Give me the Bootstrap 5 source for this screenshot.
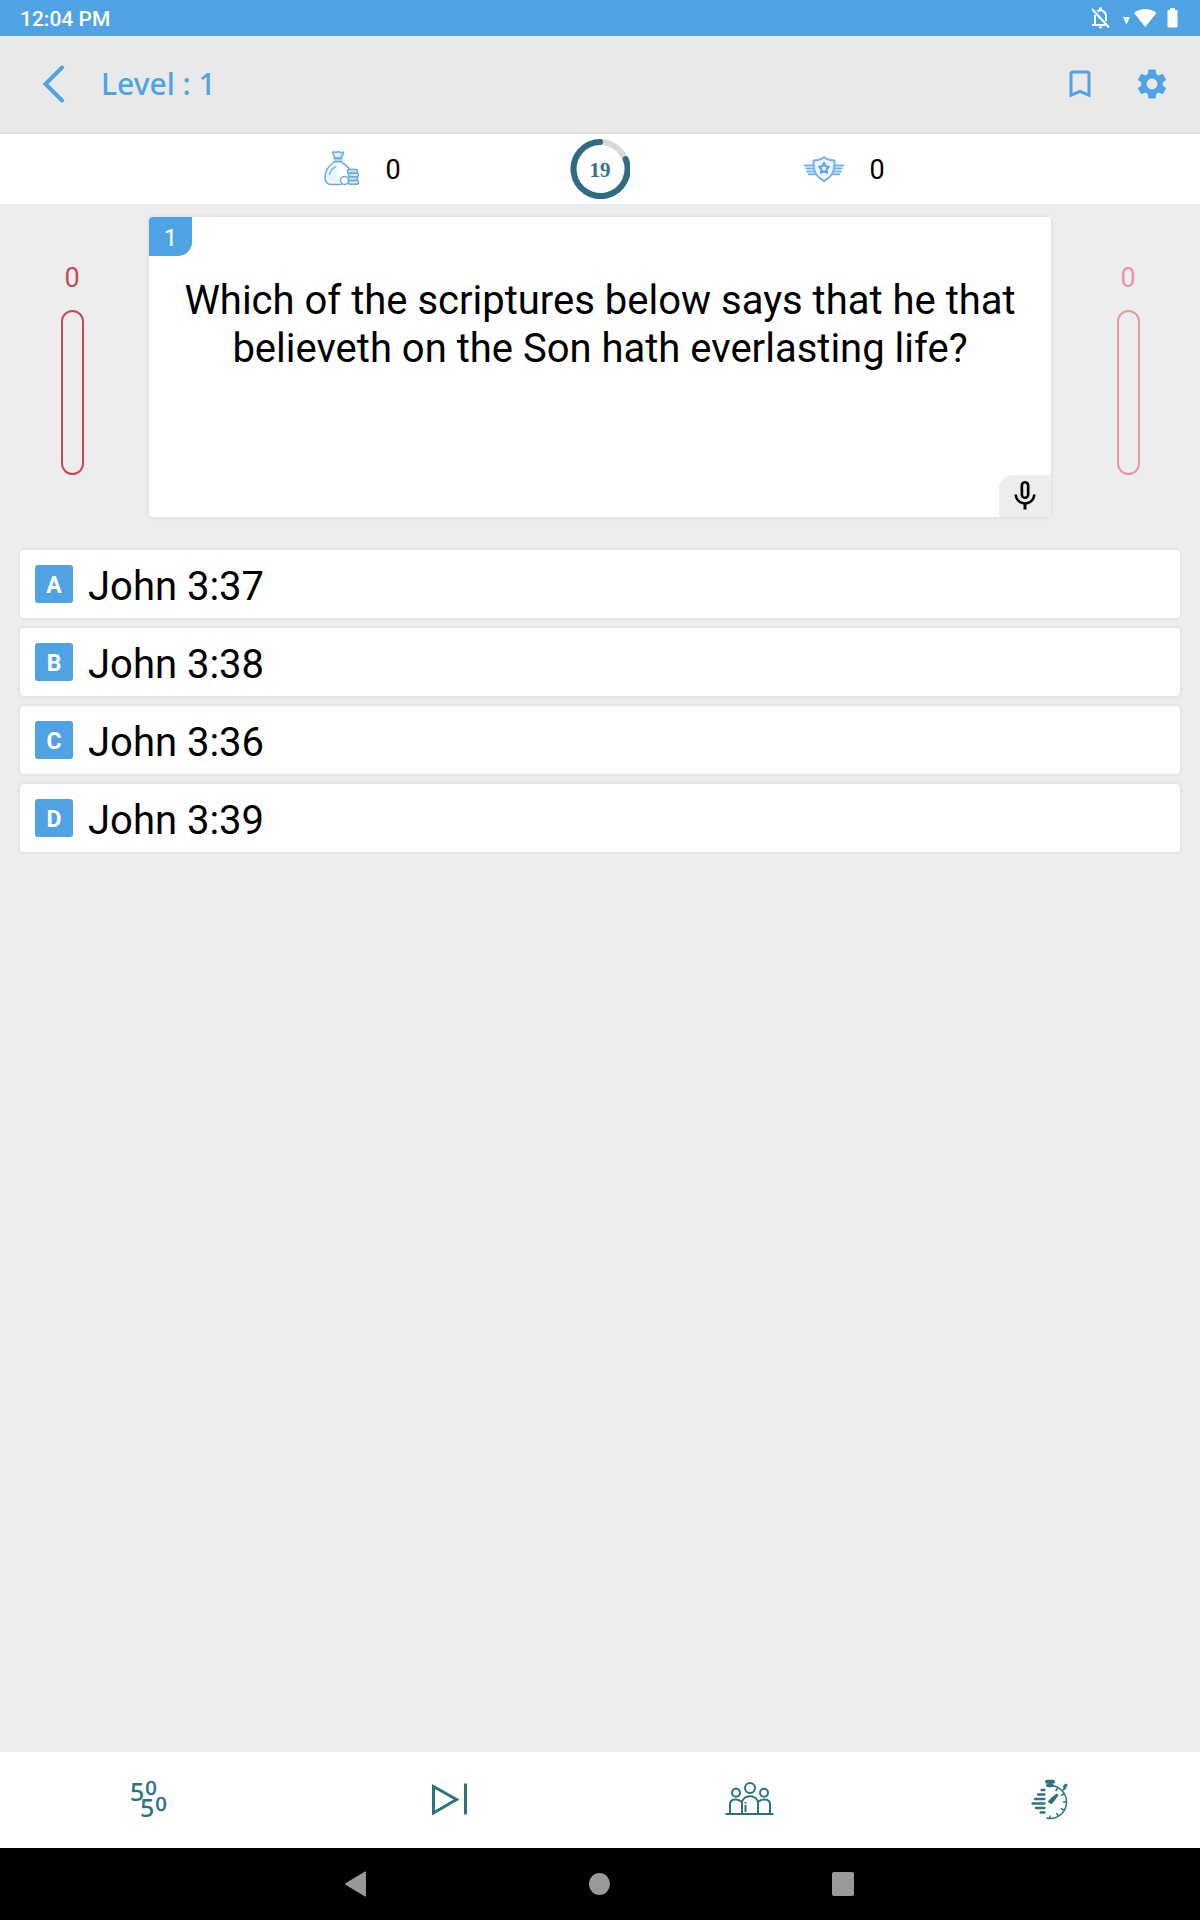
<!DOCTYPE html>
<html lang="en">
<head>
<meta charset="utf-8">
<meta name="viewport" content="width=device-width, initial-scale=1">
<title>Level : 1</title>
<link href="https://cdn.jsdelivr.net/npm/bootstrap@5.3.0/dist/css/bootstrap.min.css" rel="stylesheet">
<style>
:root { --sky: #4fa3e3; --teal: #2b7285; }
body { font-family: Roboto, "Noto Sans", sans-serif; background: #ededed; color: #000; }
svg { display: block; flex: none; }
.bare { background: none; border: 0; padding: 0; color: inherit; }
.status-strip { height: 36px; background: var(--sky); padding: 2px 22px 0 20px; font-size: 21px; line-height: 30px; font-weight: 500; }
.app-head { height: 98px; background: #e9e9e9; border-bottom: 2px solid #dedede; padding: 0 30px 0 34px; color: var(--sky); }
.app-title { font: 500 30px/40px "Noto Sans", "Open Sans", sans-serif; margin: 0; }
.head-start { gap: 22px; }
.tools { gap: 36px; }
.stats { height: 70px; }
.stat { gap: 24px; }
.stat .num { padding-top: 2px; }
.num { font-size: 27px; line-height: 32px; }
.timer { width: 60px; height: 60px; }
.timer span { font: 700 21px/24px "Liberation Serif", serif; color: #356f8a; padding-top: 2px; }
.side { flex: 0 0 12%; color: #c64b5a; padding-top: 45px; }
.side.faded { color: #e996a2; }
.tube { width: 23px; height: 165px; border: 2px solid currentColor; border-radius: 12px; margin-top: 16px; }
.quiz-area { padding-top: 13px; }
.question { min-height: 300px; margin: 0 5px; border-radius: 4px; box-shadow: 0 0 4px rgba(0,0,0,.1); padding: 60px 24px; }
.question h1 { font-size: 40px; line-height: 48px; font-weight: 400; margin: 0; }
.q-index { width: 43px; height: 39px; background: var(--sky); border-radius: 4px 0 14px 0; font-size: 24px; line-height: 42px; }
.mic { width: 52px; height: 42px; background: #ededed; border-radius: 14px 0 4px 0; }
.answers { gap: 10px; padding: 33px 20px 0; }
.answer { height: 68px; border-radius: 4px; padding: 0 15px; gap: 15px; font-size: 40px; line-height: 48px; box-shadow: 0 0 4px rgba(0,0,0,.1); }
.answer span:last-child { padding-top: 5px; }
.letter { width: 38px; height: 38px; border-radius: 3px; background: var(--sky); font-size: 23px; line-height: 41px; font-weight: 700; }
.lifelines { height: 96px; color: var(--teal); }
.sys-nav { height: 72px; gap: 208px; background: #000; color: #999; }
</style>
<script src="https://cdn.jsdelivr.net/npm/bootstrap@5.3.0/dist/js/bootstrap.bundle.min.js"></script>
</head>
<body class="d-flex flex-column min-vh-100">

<div class="status-strip d-flex align-items-center justify-content-between text-white">
  <span>12:04 PM</span>
  <svg width="90" height="24" viewBox="0 0 90 24" fill="currentColor" aria-hidden="true">
    <g fill="none" stroke="currentColor" stroke-width="2">
      <path d="M4 2 21 20.500"/>
      <path d="M7 8v9.500M4 18h13.500M9.500 4.500C13 1.500 18 5 18 9v5"/>
    </g>
    <path d="M11 .5h3v3h-3zM10.500 19.500h4a2 2 0 0 1-4 0z"/>
    <path d="M35 10h7l-3.500 7.500z"/>
    <path d="M46 6c6-5.500 16.500-5.500 22.500 0L57.200 20z"/>
    <path d="M82 1h5v2h1.500q1 0 1 1v15.500q0 1-1 1h-8q-1 0-1-1V4q0-1 1-1H82z"/>
  </svg>
</div>

<header class="app-head d-flex align-items-center justify-content-between">
  <div class="head-start d-flex align-items-center">
    <button class="bare" aria-label="Back">
      <svg width="45" height="44" viewBox="0 0 45 44" fill="none" stroke="currentColor" stroke-width="4" stroke-linecap="round" stroke-linejoin="miter"><path d="M28 5.500 11.500 22 28 38.500"/></svg>
    </button>
    <p class="app-title">Level : 1</p>
  </div>
  <div class="tools d-flex">
    <button class="bare" aria-label="Bookmark">
      <svg width="36" height="36" viewBox="0 0 24 24" fill="currentColor"><path d="M17 3H7c-1.100 0-2 .9-2 2v16l7-3 7 3V5c0-1.100-.9-2-2-2zm0 15-5-2.180L7 18V5h10v13z"/></svg>
    </button>
    <button class="bare" aria-label="Settings">
      <svg width="36" height="36" viewBox="0 0 24 24" fill="currentColor"><path d="M19.140 12.940c.04-.3.060-.61.060-.94 0-.32-.02-.64-.07-.94l2.030-1.580c.18-.14.230-.41.120-.61l-1.920-3.320c-.12-.22-.37-.29-.59-.22l-2.390.96c-.5-.38-1.030-.7-1.620-.94l-.36-2.540c-.04-.24-.24-.41-.48-.41h-3.840c-.24 0-.43.170-.47.410l-.36 2.540c-.59.240-1.130.570-1.620.940l-2.390-.96c-.22-.08-.47 0-.59.220L2.740 8.870c-.12.210-.08.470.120.610l2.030 1.580c-.05.3-.09.630-.09.940s.02.640.070.940l-2.030 1.580c-.18.140-.23.410-.12.610l1.920 3.320c.12.220.37.290.59.220l2.390-.96c.5.380 1.030.7 1.620.94l.36 2.540c.05.240.24.410.48.410h3.840c.24 0 .44-.17.470-.41l.36-2.540c.59-.24 1.130-.56 1.620-.94l2.390.96c.22.080.47 0 .59-.22l1.920-3.320c.12-.22.070-.47-.12-.61l-2.010-1.580zM12 15.600c-1.980 0-3.600-1.620-3.600-3.600s1.620-3.600 3.600-3.600 3.600 1.620 3.600 3.600-1.620 3.600-3.600 3.600z"/></svg>
    </button>
  </div>
</header>

<section class="stats bg-white">
  <div class="row row-cols-5 g-0 h-100 justify-content-center align-items-center">
    <div class="stat d-flex justify-content-center align-items-center ps-1">
      <svg width="38" height="38" viewBox="0 0 38 38" fill="none" stroke="#6fa9dc" stroke-width="1.500" stroke-linejoin="round" stroke-linecap="round" aria-hidden="true">
        <path d="M12 8 9.500 2.500c2-2 2.500 1 4.500-.5s3 1.500 4.500.5 2.500-.5 2 1L17.500 8.500z" fill="#dcedfc"/>
        <path d="M11.500 8.500h7M11.500 11.500h7" stroke-width="2"/>
        <path d="M12 11.500C6 15.500 1.500 20 2 27.500c.3 5.500 3 7 6 7h10M18 11.500c3 2.500 6.500 4.500 9 8" fill="#edf6ff"/>
        <path d="M6.500 24.500c1-4 3-6.500 6.500-8" stroke="#82b9ea"/>
        <g fill="#cfe6fb"><rect x="24.500" y="19.500" width="10" height="3.700" rx="1.500"/><rect x="25.500" y="23.200" width="10" height="3.700" rx="1.500"/><rect x="24.500" y="26.900" width="10" height="3.700" rx="1.500"/><rect x="25.500" y="30.600" width="10" height="3.700" rx="1.500"/></g>
        <circle cx="21.500" cy="30.500" r="4" fill="#fff"/>
      </svg>
      <span class="num">0</span>
    </div>
    <div class="d-flex justify-content-center">
      <div class="timer position-relative d-flex align-items-center justify-content-center">
        <svg class="position-absolute top-0 start-0" width="60" height="60" viewBox="0 0 60 60" fill="none" stroke-width="6" aria-hidden="true">
          <circle cx="30" cy="30" r="27" stroke="#d9d9d9"/>
          <path d="M55.700 20A27 27 0 1 1 30 3" stroke="#2f6c84" stroke-linecap="round"/>
        </svg>
        <span>19</span>
      </div>
    </div>
    <div class="stat d-flex justify-content-center align-items-center ps-2">
      <svg width="42" height="28" viewBox="0 0 42 28" fill="none" stroke="#76b2e8" stroke-width="2" stroke-linejoin="round" aria-hidden="true">
        <path d="M1 10.500h10M2.500 13.500h9M3.500 16.500h9M5 19.300h8M41 10.500H31M39.500 13.500h-9M38.500 16.500h-9M37 19.300h-8"/>
        <path d="M21 2c3 2.500 6.500 3.500 10.500 3.500C32 16 29 22 21 26 13 22 10 16 10.500 5.500 14.500 5.500 18 4.500 21 2z" fill="#e9f4ff"/>
        <path d="m21 8 1.500 3.200 3.500.5-2.500 2.500.6 3.600-3.100-1.700-3.100 1.700.6-3.600-2.500-2.500 3.500-.5z" stroke="#5ea2e2"/>
      </svg>
      <span class="num">0</span>
    </div>
  </div>
</section>

<main class="flex-grow-1">
  <div class="quiz-area d-flex">
    <div class="side num d-flex flex-column align-items-center">0<div class="tube"></div></div>
    <section class="question position-relative flex-grow-1 bg-white text-center">
      <span class="q-index position-absolute top-0 start-0 text-white">1</span>
      <h1>Which of the scriptures below says that he that believeth on the Son hath everlasting life?</h1>
      <button class="bare mic position-absolute bottom-0 end-0 d-flex align-items-center justify-content-center" aria-label="Read aloud">
        <svg width="36" height="36" viewBox="0 0 24 24" fill="#000"><path d="M12 14c1.660 0 3-1.340 3-3V5c0-1.660-1.340-3-3-3S9 3.340 9 5v6c0 1.660 1.340 3 3 3zm-1.200-9.100c0-.66.540-1.200 1.200-1.200s1.200.54 1.200 1.200l-.01 6.200c0 .66-.53 1.200-1.190 1.200s-1.200-.54-1.200-1.200V4.900zm6.500 6.100c0 3-2.540 5.100-5.300 5.100S6.700 14 6.700 11H5c0 3.410 2.720 6.230 6 6.720V21h2v-3.280c3.280-.48 6-3.300 6-6.720h-1.700z"/></svg>
      </button>
    </section>
    <div class="side faded num d-flex flex-column align-items-center">0<div class="tube"></div></div>
  </div>
  <div class="answers d-flex flex-column">
    <button class="bare answer bg-white d-flex align-items-center text-start"><span class="letter text-white text-center">A</span><span>John 3:37</span></button>
    <button class="bare answer bg-white d-flex align-items-center text-start"><span class="letter text-white text-center">B</span><span>John 3:38</span></button>
    <button class="bare answer bg-white d-flex align-items-center text-start"><span class="letter text-white text-center">C</span><span>John 3:36</span></button>
    <button class="bare answer bg-white d-flex align-items-center text-start"><span class="letter text-white text-center">D</span><span>John 3:39</span></button>
  </div>
</main>

<footer>
  <div class="lifelines bg-white">
    <div class="row row-cols-4 g-0 h-100 align-items-center">
      <button class="bare d-flex justify-content-center" aria-label="50 50">
        <svg width="60" height="60" viewBox="0 0 60 60" fill="currentColor" font-family="Noto Sans, sans-serif" font-weight="500">
          <text x="10" y="31" font-size="25">5</text><text x="25" y="25" font-size="19" font-family="DejaVu Sans, sans-serif" stroke="currentColor" stroke-width=".5">0</text>
          <text x="20" y="47" font-size="25">5</text><text x="35" y="41" font-size="19" font-family="DejaVu Sans, sans-serif" stroke="currentColor" stroke-width=".5">0</text>
        </svg>
      </button>
      <button class="bare d-flex justify-content-center" aria-label="Skip">
        <svg width="44" height="44" viewBox="0 0 44 44" fill="none" stroke="currentColor" stroke-width="3"><path d="M5.500 8.500v26.500L28.500 21.500zM37.500 5.500v31"/></svg>
      </button>
      <button class="bare d-flex justify-content-center" aria-label="Ask the audience">
        <svg width="52" height="44" viewBox="0 0 52 44" fill="none" stroke="currentColor" stroke-width="2">
          <path d="M1.500 36h48M6 36V26q0-4 5-4.500 4-.3 7 2.500M46 36V26q0-4-5-4.500-4-.3-7 2.500M18 36V25c0-9 16-9 16 0v11"/>
          <circle cx="12" cy="14.700" r="4"/><circle cx="26" cy="10" r="5"/><circle cx="40" cy="14.700" r="4"/><path d="M21.500 27v7M21.500 24v1.500"/>
        </svg>
      </button>
      <button class="bare d-flex justify-content-center" aria-label="Extra time">
        <svg width="44" height="44" viewBox="0 0 44 44" fill="none" stroke="currentColor" stroke-width="2" stroke-linecap="round">
          <path d="M19 3.800h6" stroke-width="4"/><path d="M22 4v4M19.500 7.500h5M36.500 8.500l1.500-1.500" stroke-width="3"/><path d="M35.500 11.500l2-2"/>
          <path d="M22 7.500a16.500 16.500 0 0 1 0 33q-2 0-3-.5" stroke-width="1.500"/>
          <path d="M29.500 10.500l-1.500 2M35.500 16l-2 1.300M38 24h-2.500M35.500 32l-2-1.300M30 37.500l-1.200-2M22 40v-2" stroke-width="1.500"/>
          <path d="M21.500 23.500q1.500-2.200 8-7-4.500 6.500-6.500 8.200z" fill="currentColor" stroke-width="2.500"/>
          <path d="M13.500 12h3M10 16.500h6.500M7 21h9.500M4.500 25.500h12M8 30h8.500M12.500 34.500h4" stroke-width="2.300"/>
        </svg>
      </button>
    </div>
  </div>
  <nav class="sys-nav d-flex justify-content-center align-items-center" aria-label="System">
    <button class="bare" aria-label="Back"><svg width="36" height="36" viewBox="0 0 36 36"><path d="M27 6.500v23L8 18z" fill="currentColor" stroke="currentColor" stroke-width="2" stroke-linejoin="round"/></svg></button>
    <button class="bare" aria-label="Home"><svg width="36" height="36" viewBox="0 0 36 36" fill="currentColor"><ellipse cx="17.500" cy="18" rx="10.500" ry="11"/></svg></button>
    <button class="bare" aria-label="Recent apps"><svg width="36" height="36" viewBox="0 0 36 36" fill="currentColor"><rect x="6" y="6" width="22" height="24" rx="2"/></svg></button>
  </nav>
</footer>
</body>
</html>
